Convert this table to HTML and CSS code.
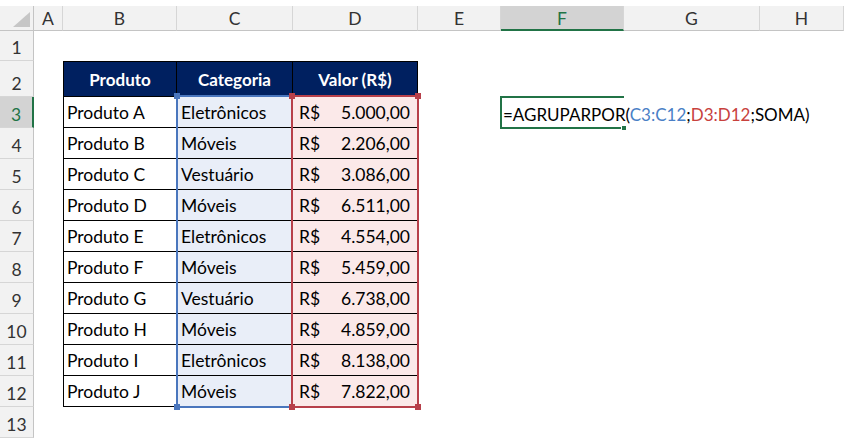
FILE: index.html
```html
<!DOCTYPE html>
<html lang="pt-BR">
<head>
<meta charset="utf-8">
<title>AGRUPARPOR</title>
<link rel="stylesheet" href="styles.css">
</head>
<body>
<div class="sheet">
  <div class="strip"></div>

  <div class="corner hdr-row hdr-col">
    <svg class="corner-tri" width="17" height="15" viewBox="0 0 17 15"><polygon points="17,0 17,15 0,15" fill="#c6c6c6"/></svg>
  </div>
  <div class="ch hdr-row colA">A</div>
  <div class="ch hdr-row colB">B</div>
  <div class="ch hdr-row colC">C</div>
  <div class="ch hdr-row colD">D</div>
  <div class="ch hdr-row colE">E</div>
  <div class="ch hdr-row colF ch-active">F</div>
  <div class="ch hdr-row colG">G</div>
  <div class="ch hdr-row colH">H</div>

  <div class="rh hdr-col row1">1</div>
  <div class="rh hdr-col row2">2</div>
  <div class="rh hdr-col row3 rh-active">3</div>
  <div class="rh hdr-col row4">4</div>
  <div class="rh hdr-col row5">5</div>
  <div class="rh hdr-col row6">6</div>
  <div class="rh hdr-col row7">7</div>
  <div class="rh hdr-col row8">8</div>
  <div class="rh hdr-col row9">9</div>
  <div class="rh hdr-col row10">10</div>
  <div class="rh hdr-col row11">11</div>
  <div class="rh hdr-col row12">12</div>
  <div class="rh hdr-col row13">13</div>

  <div class="th first row2 colB">Produto</div>
  <div class="th row2 colC">Categoria</div>
  <div class="th row2 colD">Valor (R$)</div>

  <div class="td first row3 colB">Produto A</div>
  <div class="td cat row3 colC">Eletrônicos</div>
  <div class="td val row3 colD"><span>R$</span><span>5.000,00</span></div>

  <div class="td first row4 colB">Produto B</div>
  <div class="td cat row4 colC">Móveis</div>
  <div class="td val row4 colD"><span>R$</span><span>2.206,00</span></div>

  <div class="td first row5 colB">Produto C</div>
  <div class="td cat row5 colC">Vestuário</div>
  <div class="td val row5 colD"><span>R$</span><span>3.086,00</span></div>

  <div class="td first row6 colB">Produto D</div>
  <div class="td cat row6 colC">Móveis</div>
  <div class="td val row6 colD"><span>R$</span><span>6.511,00</span></div>

  <div class="td first row7 colB">Produto E</div>
  <div class="td cat row7 colC">Eletrônicos</div>
  <div class="td val row7 colD"><span>R$</span><span>4.554,00</span></div>

  <div class="td first row8 colB">Produto F</div>
  <div class="td cat row8 colC">Móveis</div>
  <div class="td val row8 colD"><span>R$</span><span>5.459,00</span></div>

  <div class="td first row9 colB">Produto G</div>
  <div class="td cat row9 colC">Vestuário</div>
  <div class="td val row9 colD"><span>R$</span><span>6.738,00</span></div>

  <div class="td first row10 colB">Produto H</div>
  <div class="td cat row10 colC">Móveis</div>
  <div class="td val row10 colD"><span>R$</span><span>4.859,00</span></div>

  <div class="td first row11 colB">Produto I</div>
  <div class="td cat row11 colC">Eletrônicos</div>
  <div class="td val row11 colD"><span>R$</span><span>8.138,00</span></div>

  <div class="td first row12 colB">Produto J</div>
  <div class="td cat row12 colC">Móveis</div>
  <div class="td val row12 colD"><span>R$</span><span>7.822,00</span></div>

  <div class="range range-blue">
    <i class="hd tl"></i><i class="hd tr"></i><i class="hd bl"></i><i class="hd br"></i>
  </div>
  <div class="range range-red">
    <i class="hd tl"></i><i class="hd tr"></i><i class="hd bl"></i><i class="hd br"></i>
  </div>

  <div class="active row3 colF">
    <span class="formula">=AGRUPARPOR(<span class="ref-blue">C3:C12</span>;<span class="ref-red">D3:D12</span>;SOMA)</span>
    <i class="fill-handle"></i>
  </div>
</div>
</body>
</html>
```

FILE: styles.css
```css
* { box-sizing: border-box; }

html, body {
  margin: 0;
  padding: 0;
  background: #ffffff;
}

body {
  width: 844px;
  height: 439px;
  overflow: hidden;
  font-family: Lato, "Open Sans", "Liberation Sans", sans-serif;
  font-size: 17px;
  color: #000;
}

.sheet {
  display: grid;
  width: 844px;
  height: 439px;
  grid-template-columns: 34px 29px 114px 116px 125px 83px 123px 136px 1fr;
  grid-template-rows: 6px 25px 30px 36px repeat(11, 31px) 1fr;
}

.strip { grid-row: 1; grid-column: 1 / -1; background: #ffffff; }

.hdr-row { grid-row: 2; }
.hdr-col { grid-column: 1; }

.colA { grid-column: 2; }
.colB { grid-column: 3; }
.colC { grid-column: 4; }
.colD { grid-column: 5; }
.colE { grid-column: 6; }
.colF { grid-column: 7; }
.colG { grid-column: 8; }
.colH { grid-column: 9; }

.row1 { grid-row: 3; }
.row2 { grid-row: 4; }
.row3 { grid-row: 5; }
.row4 { grid-row: 6; }
.row5 { grid-row: 7; }
.row6 { grid-row: 8; }
.row7 { grid-row: 9; }
.row8 { grid-row: 10; }
.row9 { grid-row: 11; }
.row10 { grid-row: 12; }
.row11 { grid-row: 13; }
.row12 { grid-row: 14; }
.row13 { grid-row: 15; }

/* headers */
.corner {
  background: #f2f2f2;
  border-right: 1px solid #c4c4c4;
  border-bottom: 1px solid #c4c4c4;
  display: flex;
  align-items: flex-end;
  justify-content: flex-end;
  padding: 0 3px 3px 0;
}

.ch {
  background: #f2f2f2;
  border-right: 1px solid #d6d6d6;
  border-bottom: 1px solid #c4c4c4;
  display: flex;
  align-items: flex-end;
  justify-content: center;
  line-height: 20px;
  padding-bottom: 1px;
  color: #333;
  font-size: 17.5px;
}

.ch-active {
  background: #d3d3d3;
  color: #217346;
  border-bottom: 2px solid #217346;
  padding-bottom: 0;
}

.rh {
  background: #f2f2f2;
  border-right: 1px solid #c4c4c4;
  border-bottom: 1px solid #d6d6d6;
  display: flex;
  align-items: flex-end;
  justify-content: center;
  line-height: 20px;
  padding-bottom: 2px;
  color: #333;
  font-size: 17.5px;
}

.rh-active {
  background: #d3d3d3;
  color: #217346;
  border-right: 2px solid #217346;
}

/* table */
.th, .td {
  border-right: 1px solid #000;
  border-bottom: 1px solid #000;
  display: flex;
  align-items: flex-end;
  line-height: 20px;
  white-space: nowrap;
  font-size: 17.5px;
}

.th.first, .td.first { border-left: 1px solid #000; }

.th {
  background: #002060;
  color: #fff;
  font-weight: 700;
  border-top: 1px solid #000;
  justify-content: center;
  padding-bottom: 6px;
  font-size: 17px;
}

.td {
  padding: 0 4px 4px 4px;
}

.td.first { padding-left: 3px; }

.cat { background: #e9eef8; }

.val {
  background: #fbe9e9;
  justify-content: space-between;
  padding: 0 7px 4px 6px;
}

/* range highlights */
.range {
  grid-row: 5 / 15;
  position: relative;
  z-index: 2;
  border: 2px solid;
  pointer-events: none;
}

.range-blue {
  grid-column: 4;
  border-color: #4a76bd;
  margin: -2px 0 -1px -1px;
}

.range-red {
  grid-column: 5;
  border-color: #b7404a;
  margin: -2px -1px -1px -2px;
}

.hd {
  position: absolute;
  width: 6px;
  height: 6px;
}

.range-blue .hd { background: #4a76bd; }
.range-red .hd { background: #b7404a; }

.hd.tl { left: -4px; top: -4px; }
.hd.tr { right: -4px; top: -4px; }
.hd.bl { left: -4px; bottom: -4px; }
.hd.br { right: -4px; bottom: -4px; }

/* active cell */
.active {
  position: relative;
  z-index: 3;
  margin: -1px 0 -1px -1px;
  border-top: 2px solid #217346;
  border-left: 2px solid #217346;
  border-bottom: 2px solid #217346;
  display: flex;
  align-items: flex-end;
  padding: 0 0 2px 1px;
  line-height: 20px;
  white-space: nowrap;
  overflow: visible;
}

.formula { position: relative; z-index: 1; }

.ref-blue { color: #4a7fc6; }
.ref-red { color: #c8413d; }

.fill-handle {
  position: absolute;
  right: -3px;
  bottom: -4px;
  width: 6px;
  height: 6px;
  background: #217346;
  border: 1px solid #fff;
}
```
